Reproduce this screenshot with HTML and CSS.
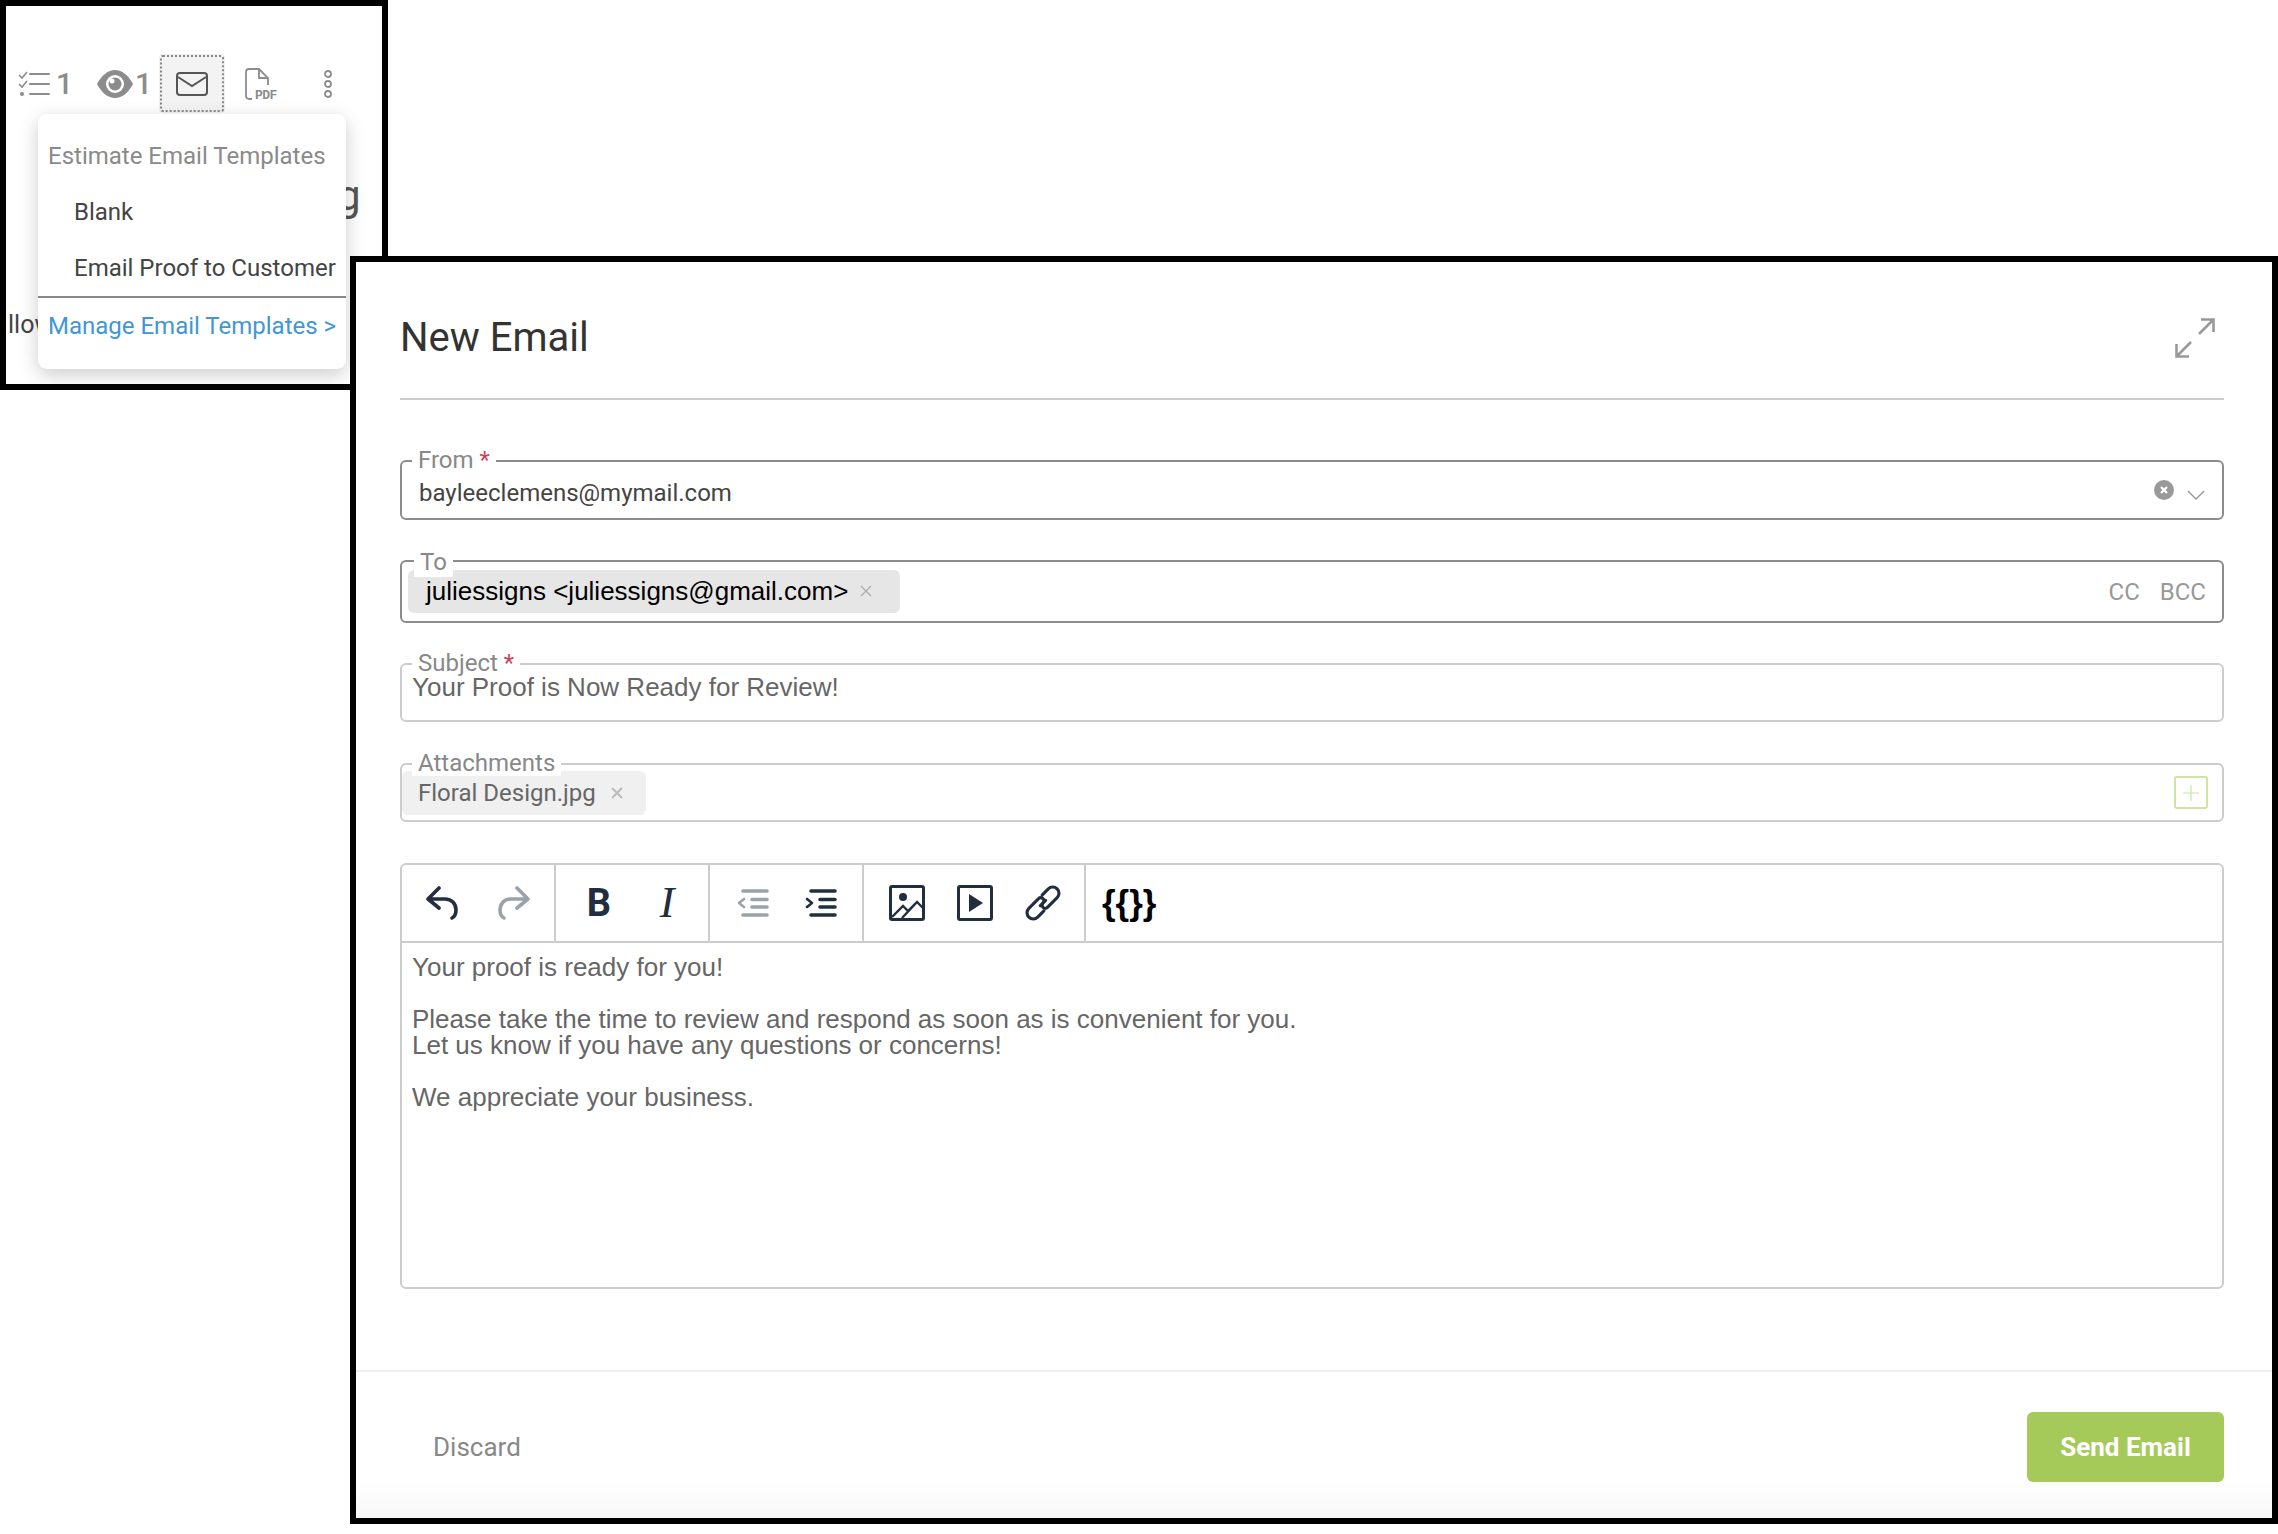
FILE: index.html
```html
<!DOCTYPE html>
<html lang="en">
<head>
<meta charset="UTF-8">
<title>New Email</title>
<link rel="stylesheet" href="styles.css">
</head>
<body>
    <div id="estimate_panel" class="shot">
        <div class="tool_row">
            <svg class="ic_list" viewBox="0 0 32 26" fill="none" stroke="#8c8c8c" stroke-width="2">
                <path d="M1 4l3 3 5-6M1 13l3 3 5-6" stroke-width="1.6"/>
                <path d="M12 3h19M12 13h19M12 23h19" stroke-linecap="round"/>
                <circle cx="4" cy="23" r="2" fill="#8c8c8c" stroke="none"/>
            </svg>
            <span class="count count_list">1</span>
            <svg class="ic_eye" viewBox="0 0 36 28">
                <path d="M0 14C5 5 11 0 18 0s13 5 18 14c-5 9-11 14-18 14S5 23 0 14z" fill="#8c8c8c"/>
                <circle cx="18" cy="14" r="9" fill="#fff"/>
                <circle cx="18" cy="14" r="6.5" fill="#8c8c8c"/>
                <circle cx="15" cy="11" r="2.5" fill="#fff"/>
            </svg>
            <span class="count">1</span>
            <div class="mail_btn">
                <svg class="ic_mail" viewBox="0 0 32 24" fill="none" stroke="#555" stroke-width="2">
                    <rect x="1" y="1" width="30" height="22" rx="3"/>
                    <path d="M2 5l14 9 14-9"/>
                </svg>
            </div>
            <svg class="ic_pdf" viewBox="0 0 32 32" fill="none" stroke="#8c8c8c" stroke-width="1.8">
                <path d="M7 31H4a3 3 0 0 1-3-3V4a3 3 0 0 1 3-3h10l9 9v7M14 1v9h9"/>
                <text x="10" y="31" class="pdf_txt">PDF</text>
            </svg>
            <svg class="ic_dots" viewBox="0 0 8 28" fill="none" stroke="#8c8c8c" stroke-width="1.8">
                <circle cx="4" cy="4" r="3"/>
                <circle cx="4" cy="14" r="3"/>
                <circle cx="4" cy="24" r="3"/>
            </svg>
        </div>
        <div class="under_title">g</div>
        <div class="under_text">llow</div>

        <div class="template_menu">
            <div class="menu_title">Estimate Email Templates</div>
            <div class="menu_item">Blank</div>
            <div class="menu_item">Email Proof to Customer</div>
            <div class="menu_link">Manage Email Templates &gt;</div>
        </div>
    </div>

    <div id="email_panel" class="shot">
        <div class="email_head">
            <h1>New Email</h1>
            <svg class="ic_expand" viewBox="0 0 40 40" fill="none" stroke="#999" stroke-width="2.6">
                <path d="M24 16L38 2M26 1.500h12.500V14M16 24L2 38M1.500 26v12.500H14"/>
            </svg>
        </div>

        <div class="email_form">
            <div class="field field_dark field_from">
                <span class="field_label">From <b>*</b></span>
                <span class="from_value">bayleeclemens@mymail.com</span>
                <svg class="ic_clear" viewBox="0 0 20 20">
                    <circle cx="10" cy="10" r="10" fill="#999"/>
                    <path d="M7 7l6 6M13 7l-6 6" stroke="#fff" stroke-width="2.2"/>
                </svg>
                <svg class="ic_chevron" viewBox="0 0 20 11" fill="none" stroke="#999" stroke-width="1.5">
                    <path d="M1 1l9 9 9-9"/>
                </svg>
            </div>

            <div class="field field_dark field_to">
                <span class="field_label label_to">To</span>
                <span class="chip chip_to">juliessigns &lt;juliessigns@gmail.com&gt;<svg class="ic_x" viewBox="0 0 12 12" stroke="#aaa" stroke-width="1.2"><path d="M1 1l10 10M11 1L1 11"/></svg></span>
                <span class="cc_links"><span>CC</span><span>BCC</span></span>
            </div>

            <div class="field field_subject">
                <span class="field_label label_subject">Subject <b>*</b></span>
                <span class="subject_value">Your Proof is Now Ready for Review!</span>
            </div>

            <div class="field field_attach">
                <span class="field_label">Attachments</span>
                <span class="chip chip_file">Floral Design.jpg<svg class="ic_x" viewBox="0 0 12 12" stroke="#bbb" stroke-width="2"><path d="M1 1l10 10M11 1L1 11"/></svg></span>
                <span class="add_btn">
                    <svg viewBox="0 0 16 16" stroke="#cfe3a5" stroke-width="1.2"><path d="M8 0v16M0 8h16"/></svg>
                </span>
            </div>

            <div class="editor">
                <div class="editor_bar">
                    <div class="bar_group bar_first">
                        <span class="bar_btn">
                            <svg class="ic_hist" viewBox="0 0 32 34" fill="none" stroke="#222e40" stroke-width="3.6" stroke-linecap="round" stroke-linejoin="round">
                                <path d="M13 2L2 13l11 9M3 13h16c7 0 11 5 11 11 0 4-2 7-4 8"/>
                            </svg>
                        </span>
                        <span class="bar_btn">
                            <svg class="ic_hist" viewBox="0 0 32 34" fill="none" stroke="#9aa2aa" stroke-width="3.6" stroke-linecap="round" stroke-linejoin="round">
                                <path d="M19 2l11 11-11 9M29 13H13C6 13 2 18 2 24c0 4 2 7 4 8"/>
                            </svg>
                        </span>
                    </div>
                    <div class="bar_group">
                        <span class="bar_btn btn_bold">B</span>
                        <span class="bar_btn btn_italic">I</span>
                    </div>
                    <div class="bar_group">
                        <span class="bar_btn">
                            <svg class="ic_indent" viewBox="0 0 32 28" fill="none" stroke="#9aa2aa" stroke-width="3.6" stroke-linecap="round">
                                <path d="M6 2h24M15 10.500h15M15 18h15M6 26h24"/>
                                <path d="M7 10l-5 4 5 4" stroke-width="2.6" stroke-linejoin="round"/>
                            </svg>
                        </span>
                        <span class="bar_btn">
                            <svg class="ic_indent" viewBox="0 0 32 28" fill="none" stroke="#222e40" stroke-width="3.6" stroke-linecap="round">
                                <path d="M6 2h24M15 10.500h15M15 18h15M6 26h24"/>
                                <path d="M2 10l5 4-5 4" stroke-width="2.6" stroke-linejoin="round"/>
                            </svg>
                        </span>
                    </div>
                    <div class="bar_group">
                        <span class="bar_btn">
                            <svg class="ic_media" viewBox="0 0 36 36" fill="none" stroke="#222e40" stroke-width="3">
                                <rect x="1.500" y="1.500" width="33" height="33" rx="1.500"/>
                                <circle cx="14" cy="12" r="4" fill="#222e40" stroke="none"/>
                                <path d="M3 32l11-11 5 5 9-9 6 6M13 33l15-16" stroke-width="2.4"/>
                            </svg>
                        </span>
                        <span class="bar_btn">
                            <svg class="ic_media" viewBox="0 0 36 36" fill="none" stroke="#222e40" stroke-width="3">
                                <rect x="1.500" y="1.500" width="33" height="33" rx="1.500"/>
                                <path d="M12 9v18l14-9z" fill="#222e40" stroke="none"/>
                            </svg>
                        </span>
                        <span class="bar_btn">
                            <svg class="ic_media" viewBox="0 0 36 36" fill="none" stroke="#222e40" stroke-width="2.500" stroke-linecap="round">
                                <g transform="translate(18 18) rotate(-45) scale(1.250)">
                                    <path d="M-4 5H-11a5 5 0 0 1 0-10H0a2.500 2.500 0 0 1 0 5H-3"/>
                                    <path d="M4-5H11a5 5 0 0 1 0 10H0a2.500 2.500 0 0 1 0-5H3"/>
                                </g>
                            </svg>
                        </span>
                    </div>
                    <div class="bar_group bar_last">
                        <span class="btn_vars">{{}}</span>
                    </div>
                </div>
                <div class="editor_body">
                    <p>Your proof is ready for you!</p>
                    <p>Please take the time to review and respond as soon as is convenient for you.<br>Let us know if you have any questions or concerns!</p>
                    <p>We appreciate your business.</p>
                </div>
            </div>
        </div>

        <div class="email_foot">
            <span class="discard">Discard</span>
            <span class="send_btn">Send Email</span>
        </div>
    </div>
</body>
</html>
```

FILE: styles.css
```css
html, body {
    margin: 0;
    background: #fff;
}
body {
    width: 2278px;
    height: 1534px;
    position: relative;
    overflow: hidden;
    font-family: Roboto, "Liberation Sans", sans-serif;
}
svg {
    display: block;
    flex: none;
}

/* the two screenshots on the free canvas */
.shot {
    position: absolute;
    box-sizing: border-box;
    border: 6px solid #000;
    background: #fff;
    overflow: hidden;
}
#estimate_panel {
    left: 0;
    top: 0;
    width: 388px;
    height: 390px;
}
#email_panel {
    left: 350px;
    top: 256px;
    width: 1928px;
    height: 1268px;
    display: flex;
    flex-direction: column;
    background: linear-gradient(#fff 1215px, #f8f8f8);
}

/* estimate panel */
.tool_row {
    display: flex;
    align-items: center;
    height: 57px;
    margin-top: 49px;
    padding-left: 12px;
}
.ic_list {
    width: 32px;
    height: 26px;
}
.count {
    font-size: 30px;
    font-weight: 500;
    color: #8c8c8c;
    line-height: 30px;
    margin-left: 2px;
}
.count_list {
    margin-left: 6px;
}
.ic_eye {
    width: 36px;
    height: 28px;
    margin-left: 24px;
}
.mail_btn {
    box-sizing: border-box;
    width: 64px;
    height: 57px;
    margin-left: 8px;
    display: flex;
    align-items: center;
    justify-content: center;
    background: #f3f3f3;
    border: 2px dotted #888;
    border-radius: 3px;
    box-shadow: 0 0 0 1px #f0f0f0;
}
.ic_mail {
    width: 32px;
    height: 24px;
}
.ic_pdf {
    width: 32px;
    height: 32px;
    margin-left: 21px;
    overflow: visible;
}
.pdf_txt {
    font-family: "Liberation Mono", monospace;
    font-size: 13px;
    font-weight: 700;
    letter-spacing: -0.6px;
    fill: #8c8c8c;
    stroke: none;
}
.ic_dots {
    width: 8px;
    height: 28px;
    margin-left: 47px;
}
.under_title {
    margin: 62px 0 0 331px;
    font-size: 42px;
    line-height: 44px;
    color: #555;
}
.under_text {
    width: 32px;
    margin: 93px 0 0 2px;
    overflow: hidden;
    font-size: 25px;
    line-height: 28px;
    color: #444;
}
.template_menu {
    position: absolute;
    left: 32px;
    top: 108px;
    width: 308px;
    box-sizing: border-box;
    padding: 14px 0 16px;
    background: #fff;
    border-radius: 9px;
    box-shadow: 0 6px 20px rgba(0, 0, 0, 0.2);
    font-size: 24px;
}
.menu_title, .menu_item {
    line-height: 56px;
    white-space: nowrap;
}
.menu_title {
    padding-left: 10px;
    color: #8a8a8a;
}
.menu_item {
    padding-left: 36px;
    color: #444;
}
.menu_link {
    padding: 1px 0 0 10px;
    line-height: 54px;
    border-top: 2px solid #888;
    color: #4296d6;
    white-space: nowrap;
}

/* email panel header */
.email_head {
    display: flex;
    align-items: center;
    justify-content: space-between;
    box-sizing: border-box;
    height: 138px;
    margin: 0 48px 0 44px;
    padding: 15px 9px 0 0;
    border-bottom: 2px solid #ccc;
}
.email_head h1 {
    margin: 0;
    font-size: 40px;
    font-weight: 400;
    color: #333;
}
.ic_expand {
    width: 40px;
    height: 40px;
}

/* fields */
.email_form {
    margin: 60px 48px 0 44px;
}
.field {
    position: relative;
    display: flex;
    align-items: center;
    box-sizing: border-box;
    border: 2px solid #ccc;
    border-radius: 6px;
    font-size: 24px;
}
.field_dark {
    border-color: #8c8c8c;
}
.field_label {
    position: absolute;
    left: 10px;
    top: -15px;
    padding: 0 6px 0 6px;
    background: #fff;
    font-size: 24px;
    line-height: 26px;
    color: #888;
    white-space: nowrap;
}
.field_label b {
    font-weight: 400;
    color: #d0415a;
}
.field_from {
    height: 60px;
    padding: 5px 17px 0;
}
.from_value {
    flex: 1;
    color: #444;
}
.ic_clear {
    width: 20px;
    height: 20px;
    margin: -5px 13px 0 0;
}
.ic_chevron {
    width: 18px;
    height: 10px;
    margin: 4px 0 0 0;
}
.field_to {
    height: 63px;
    margin-top: 40px;
    padding: 0 16px 0 6px;
    justify-content: space-between;
}
.label_to {
    z-index: 1;
    left: 12px;
    top: -13px;
    padding: 0 6px 2px;
}
.chip {
    display: flex;
    align-items: center;
    background: #e6e6e6;
    border-radius: 6px;
    white-space: nowrap;
}
.chip_to {
    height: 43px;
    margin-top: -1px;
    padding: 0 28px 0 18px;
    font-family: "Liberation Sans", sans-serif;
    font-size: 26px;
    color: #000;
}
.ic_x {
    width: 12px;
    height: 12px;
    margin-left: 12px;
}
.cc_links {
    display: flex;
    gap: 20px;
    color: #999;
    font-size: 24px;
}
.field_subject {
    height: 59px;
    margin-top: 40px;
    padding: 0 10px 10px;
    font-family: "Liberation Sans", sans-serif;
}
.label_subject {
    top: -13px;
    line-height: 22px;
    font-family: Roboto, "Liberation Sans", sans-serif;
}
.subject_value {
    color: #666;
    font-size: 26px;
    line-height: 26px;
    margin-top: -2px;
}
.field_attach {
    height: 59px;
    margin-top: 41px;
    justify-content: space-between;
    padding-right: 14px;
}
.field_attach .field_label {
    z-index: 1;
}
.chip_file {
    height: 44px;
    padding: 0 23px 0 16px;
    background: #f0f0f0;
    color: #666;
}
.chip_file .ic_x {
    margin-left: 15px;
}
.add_btn {
    box-sizing: border-box;
    width: 34px;
    height: 33px;
    display: flex;
    align-items: center;
    justify-content: center;
    border: 2px solid #cfe3a5;
    border-radius: 3px;
}
.add_btn svg {
    width: 16px;
    height: 16px;
}

/* editor */
.editor {
    box-sizing: border-box;
    height: 426px;
    margin-top: 41px;
    border: 2px solid #ccc;
    border-radius: 6px;
}
.editor_bar {
    display: flex;
    height: 76px;
    border-bottom: 2px solid #ccc;
}
.bar_group {
    display: flex;
    align-items: center;
    padding: 0 7px 0 9px;
    border-right: 2px solid #ccc;
}
.bar_first {
    gap: 4px;
    padding: 0 6px 0 6px;
}
.bar_last {
    border-right: none;
    padding: 0 0 0 16px;
}
.bar_btn {
    width: 68px;
    display: flex;
    justify-content: center;
    color: #222e40;
}
.ic_hist {
    width: 32px;
    height: 34px;
}
.ic_indent {
    width: 32px;
    height: 28px;
}
.ic_media {
    width: 36px;
    height: 36px;
}
.btn_bold {
    font-size: 38px;
    font-weight: 700;
    line-height: 40px;
}
.btn_italic {
    font-family: "Liberation Serif", serif;
    font-style: italic;
    font-size: 44px;
    line-height: 40px;
}
.btn_vars {
    font-family: "Liberation Sans", sans-serif;
    font-size: 35px;
    font-weight: 700;
    color: #000;
    white-space: nowrap;
}
.editor_body {
    padding: 11px 10px;
    font-family: "Liberation Sans", sans-serif;
    font-size: 26px;
    line-height: 26px;
    color: #666;
}
.editor_body p {
    margin: 0 0 26px;
}

/* footer */
.email_foot {
    display: flex;
    align-items: center;
    justify-content: space-between;
    margin-top: 81px;
    padding: 40px 48px 0 77px;
    border-top: 2px solid #eee;
}
.discard {
    font-size: 26px;
    color: #888;
}
.send_btn {
    width: 197px;
    line-height: 70px;
    text-align: center;
    background: #a6ca5a;
    border-radius: 6px;
    font-size: 26px;
    font-weight: 700;
    color: #fff;
}
```
